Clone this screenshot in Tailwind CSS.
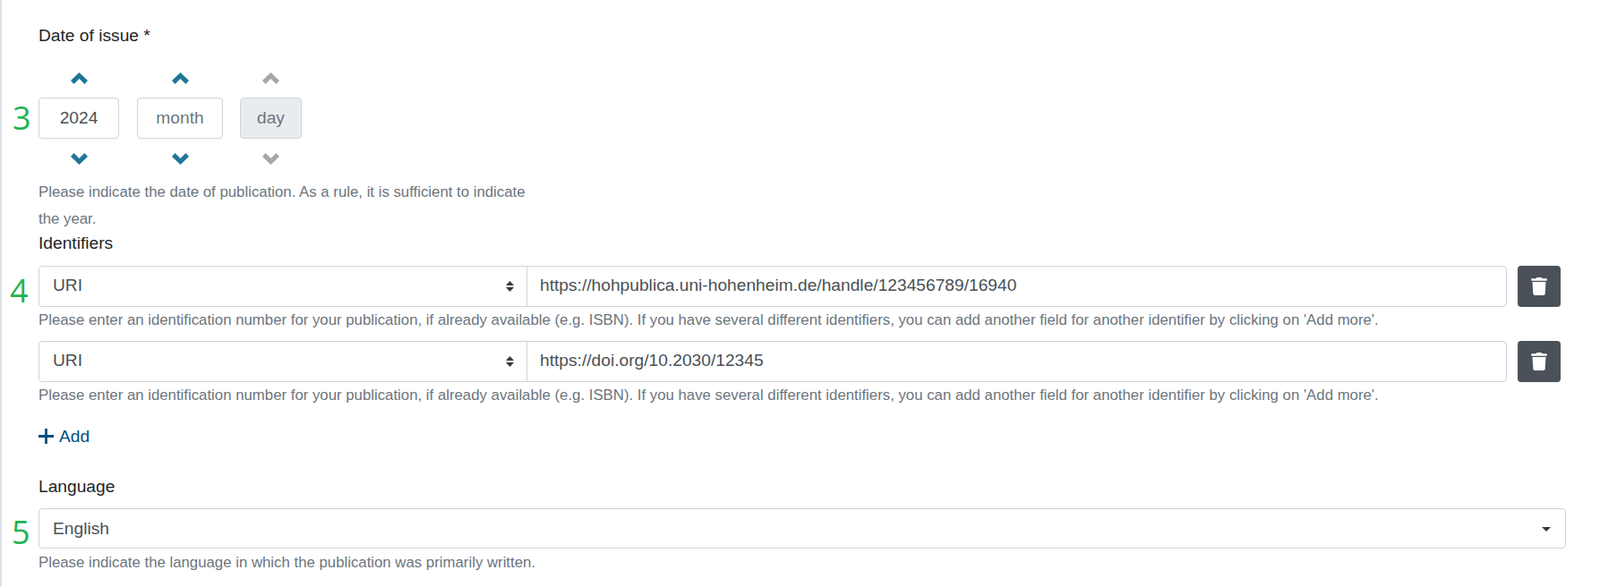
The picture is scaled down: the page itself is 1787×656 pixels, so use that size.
<!DOCTYPE html>
<html lang="en">
<head>
  <meta charset="UTF-8" />
  <title>Date of issue, identifiers, language</title>
  <script src="https://cdn.jsdelivr.net/npm/@tailwindcss/browser@4"></script>
</head>
<body class="bg-white font-['Liberation_Sans',Arial,sans-serif] text-[19.2px] text-[#212529]">
  <div class="relative h-[656px] overflow-hidden border-l-2 border-[#dee2e6] pl-[41px] pr-[37px] pt-[28px]">

    <!-- green step numbers -->
    <span class="absolute left-[12px] top-[109px] font-['Open_Sans',sans-serif] text-[36px] leading-[46px] text-[#1fb451]">3</span>
    <span class="absolute left-[9px] top-[302px] font-['Open_Sans',sans-serif] text-[36px] leading-[46px] text-[#1fb451]">4</span>
    <span class="absolute left-[11px] top-[572px] font-['Open_Sans',sans-serif] text-[36px] leading-[46px] text-[#1fb451]">5</span>

    <!-- date -->
    <label class="block leading-6">Date of issue *</label>
    <div class="mt-[29px] flex items-start">
      <div class="mr-[20px] flex w-[90px] flex-col items-center">
        <svg class="h-[13px] w-[19px] fill-[#207698]" viewBox="0 0 19 13"><path d="M9.5 0 19 9l-3.5 4-6-6-6 6L0 9z"/></svg>
        <input value="2024" class="mt-[15px] h-[46px] w-full rounded border border-[#ced4da] bg-white text-center text-[#495057]" />
        <svg class="mt-[15.5px] h-[13px] w-[19px] fill-[#207698]" viewBox="0 0 19 13"><path d="M9.5 13 0 4l3.500-4 6 6 6-6L19 4z"/></svg>
      </div>
      <div class="mr-[19px] flex w-[96px] flex-col items-center">
        <svg class="h-[13px] w-[19px] fill-[#207698]" viewBox="0 0 19 13"><path d="M9.5 0 19 9l-3.5 4-6-6-6 6L0 9z"/></svg>
        <input placeholder="month" class="mt-[15px] h-[46px] w-full rounded border border-[#ced4da] bg-white text-center text-[#495057] placeholder:text-[#6c757d]" />
        <svg class="mt-[15.5px] h-[13px] w-[19px] fill-[#207698]" viewBox="0 0 19 13"><path d="M9.5 13 0 4l3.500-4 6 6 6-6L19 4z"/></svg>
      </div>
      <div class="flex w-[69px] flex-col items-center">
        <svg class="h-[13px] w-[19px] fill-[#a3a8ad]" viewBox="0 0 19 13"><path d="M9.5 0 19 9l-3.5 4-6-6-6 6L0 9z"/></svg>
        <input disabled placeholder="day" class="mt-[15px] h-[46px] w-full rounded border border-[#ced4da] bg-[#e9ecef] text-center placeholder:text-[#6c757d]" />
        <svg class="mt-[15.5px] h-[13px] w-[19px] fill-[#a3a8ad]" viewBox="0 0 19 13"><path d="M9.5 13 0 4l3.500-4 6 6 6-6L19 4z"/></svg>
      </div>
    </div>
    <p class="mt-[16px] w-[550px] text-[16.8px] leading-[30px] text-[#6c757d]">Please indicate the date of publication. As a rule, it is sufficient to indicate the year.</p>

    <!-- identifiers -->
    <label class="block leading-6">Identifiers</label>
    <div class="mt-[13px] flex items-start">
      <div class="flex h-[46px] w-[1640px] rounded border border-[#ced4da] text-[#495057]">
        <div class="relative w-[545px] border-r border-[#ced4da]">
          <select class="h-full w-full appearance-none bg-transparent pl-[15px]"><option>URI</option></select>
          <svg class="absolute right-[13px] top-[14px] h-4 w-[11px] fill-[#343a40]" viewBox="0 0 11 16"><path d="M5.5 2 10 7H1zM5.5 14 1 9h9z"/></svg>
        </div>
        <input value="https://hohpublica.uni-hohenheim.de/handle/123456789/16940" class="min-w-0 flex-1 px-[14px]" />
      </div>
      <button class="ml-[12px] flex h-[46px] w-[48px] items-center justify-center rounded bg-[#4b5158]">
        <svg class="h-[20px] w-[18px] fill-white" viewBox="0 0 448 512"><path d="M432 32H312l-9.400-18.700A24 24 0 0 0 281.100 0H166.800a23.720 23.720 0 0 0-21.400 13.300L136 32H16A16 16 0 0 0 0 48v32a16 16 0 0 0 16 16h416a16 16 0 0 0 16-16V48a16 16 0 0 0-16-16zM53.200 467a48 48 0 0 0 47.900 45h245.800a48 48 0 0 0 47.900-45L416 128H32z"/></svg>
      </button>
    </div>
    <p class="mt-[4px] text-[16.8px] leading-[21px] text-[#6c757d]">Please enter an identification number for your publication, if already available (e.g. ISBN). If you have several different identifiers, you can add another field for another identifier by clicking on 'Add more'.</p>
    <div class="mt-[13px] flex items-start">
      <div class="flex h-[46px] w-[1640px] rounded border border-[#ced4da] text-[#495057]">
        <div class="relative w-[545px] border-r border-[#ced4da]">
          <select class="h-full w-full appearance-none bg-transparent pl-[15px]"><option>URI</option></select>
          <svg class="absolute right-[13px] top-[14px] h-4 w-[11px] fill-[#343a40]" viewBox="0 0 11 16"><path d="M5.5 2 10 7H1zM5.5 14 1 9h9z"/></svg>
        </div>
        <input value="https://doi.org/10.2030/12345" class="min-w-0 flex-1 px-[14px]" />
      </div>
      <button class="ml-[12px] flex h-[46px] w-[48px] items-center justify-center rounded bg-[#4b5158]">
        <svg class="h-[20px] w-[18px] fill-white" viewBox="0 0 448 512"><path d="M432 32H312l-9.400-18.700A24 24 0 0 0 281.100 0H166.800a23.720 23.720 0 0 0-21.400 13.300L136 32H16A16 16 0 0 0 0 48v32a16 16 0 0 0 16 16h416a16 16 0 0 0 16-16V48a16 16 0 0 0-16-16zM53.200 467a48 48 0 0 0 47.900 45h245.800a48 48 0 0 0 47.900-45L416 128H32z"/></svg>
      </button>
    </div>
    <p class="mt-[4px] text-[16.8px] leading-[21px] text-[#6c757d]">Please enter an identification number for your publication, if already available (e.g. ISBN). If you have several different identifiers, you can add another field for another identifier by clicking on 'Add more'.</p>
    <a class="mt-[24px] flex items-center gap-[6px] leading-6 text-[#004f7c]">
      <svg class="h-[17px] w-[17px] stroke-[#004f7c] stroke-[2.6]" viewBox="0 0 16 16"><path d="M8 0v16M0 8h16"/></svg>
      Add
    </a>

    <!-- language -->
    <label class="mt-[32px] block leading-6">Language</label>
    <div class="relative mt-[12px] h-[45px] w-[1706px] rounded border border-[#ced4da] text-[#495057]">
      <select class="h-full w-full appearance-none bg-transparent pl-[15px] pt-[2px]"><option>English</option></select>
      <span class="absolute right-[16px] top-[20px] h-0 w-0 border-x-[5px] border-t-[5px] border-x-transparent border-t-[#343a40]"></span>
    </div>
    <p class="mt-[5px] text-[16.8px] leading-[21px] text-[#6c757d]">Please indicate the language in which the publication was primarily written.</p>
  </div>
</body>
</html>
